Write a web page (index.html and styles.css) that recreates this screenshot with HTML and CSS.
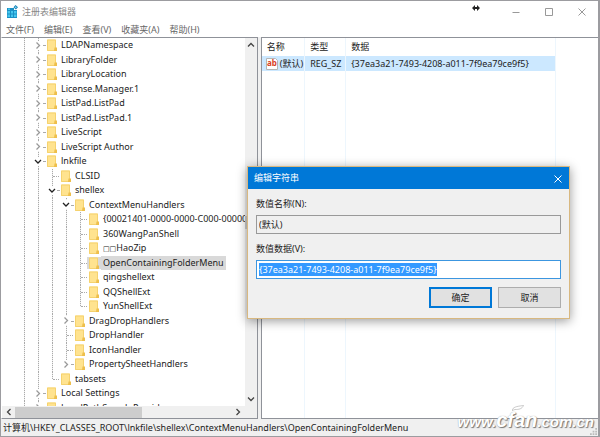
FILE: index.html
```
<!DOCTYPE html>
<html lang="zh-CN">
<head>
  <meta charset="UTF-8">
  <meta name="viewport" content="width=device-width, initial-scale=1.0">
  <title>注册表编辑器</title>
  <link rel="stylesheet" href="styles.css">
</head>
<body>
<svg class="defs" aria-hidden="true">
  <symbol id="right" viewBox="0 0 8 8"><path d="M2.5 1l3 3-3 3" fill="none" stroke="currentColor" stroke-width="1.3"/></symbol>
  <symbol id="down" viewBox="0 0 8 8"><path d="M1 2.500l3 3 3-3" fill="none" stroke="currentColor" stroke-width="1.3"/></symbol>
  <symbol id="up" viewBox="0 0 8 8"><path d="M1 5.500l3-3 3 3" fill="none" stroke="currentColor" stroke-width="1.3"/></symbol>
  <symbol id="left" viewBox="0 0 8 8"><path d="M5.5 1l-3 3 3 3" fill="none" stroke="currentColor" stroke-width="1.3"/></symbol>
  <symbol id="close" viewBox="0 0 10 10"><path d="M1.5 1.5l7 7M8.5 1.5l-7 7" fill="none" stroke="currentColor"/></symbol>
  <symbol id="folder" viewBox="0 0 10 12">
    <path d="M0 .5h9V9l1 .5V12H0z" fill="#ffe38f"/>
    <path d="M.5 1v10.500h8V1z" fill="none" stroke="#f5d26f"/>
    <path d="M7.500 8.500H10V12H7z" fill="#eebf4c"/>
  </symbol>
</svg>

<div class="window">
  <header class="titlebar">
    <svg class="app-icon" viewBox="0 0 12 13">
      <path d="M1 3h7v2h3v8H1z" fill="#1b8fc4"/>
      <path d="M1.500 6h2.500v2.500H1.500zM5 6h2v2.500H5zM8 6h2.500v2.500H8zM1.500 9.500h2.500V12H1.500zM5 9.500h2V12H5zM8 9.500h2.500V12H8zM2 3.500h2V5H2z" fill="#45c6ee"/>
      <path d="M9.500 0L12 2.200 9.800 4.500 7.500 2.300z" fill="#1780b5"/>
      <path d="M9.600 1.200l1.200 1-1 1.100-1.200-1z" fill="#7fd9f5"/>
    </svg>
    <h1>注册表编辑器</h1>
    <button class="win-btn" aria-label="最小化"><svg viewBox="0 0 10 10"><path d="M1.500 5.500h7" stroke="currentColor"/></svg></button>
    <button class="win-btn" aria-label="最大化"><svg viewBox="0 0 10 10"><path d="M1.500 1.500h7v7h-7z" fill="none" stroke="currentColor"/></svg></button>
    <button class="win-btn" aria-label="关闭"><svg><use href="#close"/></svg></button>
  </header>
  <nav class="menubar">
    <button>文件(F)</button>
    <button>编辑(E)</button>
    <button>查看(V)</button>
    <button>收藏夹(A)</button>
    <button>帮助(H)</button>
  </nav>

  <main class="panes">
    <section class="tree-pane">
      <div class="tree-view">
        <ul class="tree">
          <li><i class="line"></i><i class="line fold"><svg><use href="#right"/></svg></i><svg class="folder"><use href="#folder"/></svg><span>LDAPNamespace</span></li>
          <li><i class="line"></i><i class="line fold"><svg><use href="#right"/></svg></i><svg class="folder"><use href="#folder"/></svg><span>LibraryFolder</span></li>
          <li><i class="line"></i><i class="line fold"><svg><use href="#right"/></svg></i><svg class="folder"><use href="#folder"/></svg><span>LibraryLocation</span></li>
          <li><i class="line"></i><i class="line fold"><svg><use href="#right"/></svg></i><svg class="folder"><use href="#folder"/></svg><span>License.Manager.1</span></li>
          <li><i class="line"></i><i class="line fold"><svg><use href="#right"/></svg></i><svg class="folder"><use href="#folder"/></svg><span>ListPad.ListPad</span></li>
          <li><i class="line"></i><i class="line fold"><svg><use href="#right"/></svg></i><svg class="folder"><use href="#folder"/></svg><span>ListPad.ListPad.1</span></li>
          <li><i class="line"></i><i class="line fold"><svg><use href="#right"/></svg></i><svg class="folder"><use href="#folder"/></svg><span>LiveScript</span></li>
          <li><i class="line"></i><i class="line fold"><svg><use href="#right"/></svg></i><svg class="folder"><use href="#folder"/></svg><span>LiveScript Author</span></li>
          <li><i class="line"></i><i class="line fold open"><svg><use href="#down"/></svg></i><svg class="folder"><use href="#folder"/></svg><span>lnkfile</span></li>
          <li><i class="line"></i><i class="line"></i><i class="line tee"></i><svg class="folder"><use href="#folder"/></svg><span>CLSID</span></li>
          <li><i class="line"></i><i class="line"></i><i class="line fold open"><svg><use href="#down"/></svg></i><svg class="folder"><use href="#folder"/></svg><span>shellex</span></li>
          <li><i class="line"></i><i class="line"></i><i class="line"></i><i class="line fold open"><svg><use href="#down"/></svg></i><svg class="folder"><use href="#folder"/></svg><span>ContextMenuHandlers</span></li>
          <li><i class="line"></i><i class="line"></i><i class="line"></i><i class="line"></i><i class="line tee"></i><svg class="folder"><use href="#folder"/></svg><span>{00021401-0000-0000-C000-000000000046}</span></li>
          <li><i class="line"></i><i class="line"></i><i class="line"></i><i class="line"></i><i class="line tee"></i><svg class="folder"><use href="#folder"/></svg><span>360WangPanShell</span></li>
          <li><i class="line"></i><i class="line"></i><i class="line"></i><i class="line"></i><i class="line tee"></i><svg class="folder"><use href="#folder"/></svg><span><b>□□</b>HaoZip</span></li>
          <li class="selected"><i class="line"></i><i class="line"></i><i class="line"></i><i class="line"></i><i class="line tee"></i><svg class="folder"><use href="#folder"/></svg><span>OpenContainingFolderMenu</span></li>
          <li><i class="line"></i><i class="line"></i><i class="line"></i><i class="line"></i><i class="line tee"></i><svg class="folder"><use href="#folder"/></svg><span>qingshellext</span></li>
          <li><i class="line"></i><i class="line"></i><i class="line"></i><i class="line"></i><i class="line tee"></i><svg class="folder"><use href="#folder"/></svg><span>QQShellExt</span></li>
          <li><i class="line"></i><i class="line"></i><i class="line"></i><i class="line"></i><i class="line tee end"></i><svg class="folder"><use href="#folder"/></svg><span>YunShellExt</span></li>
          <li><i class="line"></i><i class="line"></i><i class="line"></i><i class="line fold"><svg><use href="#right"/></svg></i><svg class="folder"><use href="#folder"/></svg><span>DragDropHandlers</span></li>
          <li><i class="line"></i><i class="line"></i><i class="line"></i><i class="line tee"></i><svg class="folder"><use href="#folder"/></svg><span>DropHandler</span></li>
          <li><i class="line"></i><i class="line"></i><i class="line"></i><i class="line tee"></i><svg class="folder"><use href="#folder"/></svg><span>IconHandler</span></li>
          <li><i class="line"></i><i class="line"></i><i class="line"></i><i class="line fold end"><svg><use href="#right"/></svg></i><svg class="folder"><use href="#folder"/></svg><span>PropertySheetHandlers</span></li>
          <li><i class="line"></i><i class="line"></i><i class="line tee end"></i><svg class="folder"><use href="#folder"/></svg><span>tabsets</span></li>
          <li><i class="line"></i><i class="line fold"><svg><use href="#right"/></svg></i><svg class="folder"><use href="#folder"/></svg><span>Local Settings</span></li>
          <li><i class="line"></i><i class="line fold"><svg><use href="#right"/></svg></i><svg class="folder"><use href="#folder"/></svg><span>LocalPathSearch.Provider</span></li>
        </ul>
      </div>
      <div class="scroll-v">
        <svg><use href="#up"/></svg>
        <div class="thumb"></div>
        <svg><use href="#down"/></svg>
      </div>
      <div class="scroll-h">
        <svg><use href="#left"/></svg>
        <div class="thumb"></div>
        <svg><use href="#right"/></svg>
      </div>
    </section>

    <section class="list-pane">
      <table>
        <colgroup><col class="col-name"><col class="col-type"><col class="col-data"><col></colgroup>
        <thead>
          <tr><th>名称</th><th>类型</th><th>数据</th><td></td></tr>
        </thead>
        <tbody>
          <tr class="active">
            <td class="name">
              <svg class="ab" viewBox="0 0 12 12">
                <path d="M.5.500h9l2 2v9H.5z" fill="#fff" stroke="#b5b5b5"/>
                <text x="1" y="8">ab</text>
              </svg>(默认)</td>
            <td>REG_SZ</td>
            <td>{37ea3a21-7493-4208-a011-7f9ea79ce9f5}</td>
            <td></td>
          </tr>
          <tr class="rest"><td></td><td></td><td></td><td></td></tr>
        </tbody>
      </table>
    </section>
  </main>

  <footer class="statusbar">计算机\HKEY_CLASSES_ROOT\lnkfile\shellex\ContextMenuHandlers\OpenContainingFolderMenu
    <svg class="grip" viewBox="0 0 8 8"><path d="M6 0h2v2H6zM3 3h2v2H3zM6 3h2v2H6zM0 6h2v2H0zM3 6h2v2H3zM6 6h2v2H6z" fill="#bbb"/></svg>
  </footer>
</div>

<form class="dialog" role="dialog" aria-labelledby="dialogTitle">
  <div class="dialog-title">
    <h2 id="dialogTitle">编辑字符串</h2>
    <button type="button" aria-label="关闭"><svg><use href="#close"/></svg></button>
  </div>
  <div class="dialog-body">
    <label for="valueName">数值名称(N):</label>
    <input id="valueName" type="text" value="(默认)" readonly>
    <label for="valueData">数值数据(V):</label>
    <input id="valueData" type="text" value="{37ea3a21-7493-4208-a011-7f9ea79ce9f5}" spellcheck="false">
    <div class="actions">
      <button type="submit" class="default">确定</button>
      <button type="button">取消</button>
    </div>
  </div>
</form>

<svg class="cursor" viewBox="0 0 8 6"><path d="M0 3l3-3v2h2V0l3 3-3 3V4H3v2z" fill="#222"/></svg>
<div class="watermark">www.<span>cfan</span>.com.cn
  <svg viewBox="0 0 12 6"><path d="M0 5.500C1 2 4 1.500 11.500.500 10 4 7 4.500 3 4.500z" fill="#fff" stroke="#999" stroke-width=".5"/></svg>
</div>
<script src="script.js"></script>
</body>
</html>
```
FILE: styles.css
```
* {
  margin: 0;
  padding: 0;
  box-sizing: border-box;
}
body {
  height: 100vh;
  overflow: hidden;
  position: relative;
  padding: 1px 2px 1px 1px;
  background: #9c9ca0;
  color: #222;
  font: 9px/14px "Noto Sans", "Noto Sans CJK SC", sans-serif;
}
button, input {
  font: inherit;
  color: inherit;
}
.defs {
  display: none;
}
.window {
  display: flex;
  flex-direction: column;
  height: 100%;
  background: #fff;
}

/* Title and menu */
.titlebar {
  display: flex;
  align-items: center;
  height: 21px;
  padding-left: 5px;
}
.app-icon {
  width: 12px;
  height: 13px;
  margin-right: 4px;
}
h1 {
  flex: 1;
  font-size: 9px;
  font-weight: normal;
  color: #888;
}
.win-btn {
  width: 33px;
  height: 21px;
  border: 0;
  background: none;
  color: #999;
}
.win-btn svg, .dialog-title svg {
  width: 10px;
  height: 10px;
  vertical-align: middle;
}
.menubar {
  display: flex;
  gap: 10px;
  height: 15px;
  padding-left: 5px;
}
.menubar button {
  border: 0;
  background: none;
  color: #666;
}

/* Panes */
.panes {
  flex: 1;
  min-height: 0;
  display: flex;
  gap: 3px;
  background: #f0f0f0;
}
.tree-pane {
  flex: 0 0 43%;
  min-width: 0;
  display: grid;
  grid-template: minmax(0, 1fr) 12px / minmax(0, 1fr) 12px;
  border: 1px solid #8f9299;
  border-left-color: #fff;
  background: #f0f0f0;
}
.tree-view {
  display: flex;
  flex-direction: column;
  overflow: hidden;
  background: #fff;
}
.tree {
  flex: 1;
  display: grid;
  grid-auto-rows: 1fr;
  margin-bottom: -9px;
  padding-left: 15px;
  list-style: none;
}
.tree li {
  display: flex;
  min-height: 0;
  align-items: center;
  white-space: nowrap;
}
.tree i {
  flex: 0 0 14px;
  align-self: stretch;
  position: relative;
}
.line {
  background: repeating-linear-gradient(#aaa 0 1px, #eee 1px 2px) 7px 0 / 1px 100% no-repeat;
}
.line.end {
  background-size: 1px 50%;
}
.tee::after, .fold::after {
  content: "";
  position: absolute;
  left: 8px;
  right: 0;
  top: 50%;
  border-top: 1px dotted #aaa;
}
.fold::after {
  left: 12px;
}
.fold {
  display: flex;
  align-items: center;
  justify-content: center;
  color: #999;
}
.fold svg {
  width: 8px;
  height: 9px;
  background: #fff;
}
.fold.open {
  color: #222;
}
.folder {
  flex: none;
  width: 10px;
  height: 12px;
  margin: 0 2px;
}
.tree span {
  padding: 0 2px;
}
.tree b {
  font: 7px "DejaVu Sans", sans-serif;
}
.selected span, .selected .folder {
  background: #d9d9d9;
}
.selected .folder {
  margin-right: 0;
  box-shadow: 2px 0 #d9d9d9, -2px 0 #d9d9d9;
}
.selected span {
  margin-left: 2px;
}

/* Scrollbars */
.scroll-v, .scroll-h {
  display: flex;
  align-items: center;
  color: #444;
}
.scroll-v {
  flex-direction: column;
  padding: 3px 0;
}
.scroll-v .thumb {
  width: 12px;
  height: 13px;
  margin: auto 0;
  background: #cdcdcd;
}
.scroll-h {
  padding: 0 3px;
}
.scroll-h .thumb {
  width: 127px;
  height: 11px;
  margin: 0 auto 0 2px;
  background: #cdcdcd;
}
.scroll-v svg, .scroll-h svg {
  width: 8px;
  height: 8px;
}

/* Value list */
.list-pane {
  flex: 1;
  min-width: 0;
  border: 1px solid #8f9299;
  border-right: 0;
  background: #fff;
}
table {
  width: 100%;
  height: 100%;
  table-layout: fixed;
  border-collapse: collapse;
}
.col-name {
  width: 43px;
}
.col-type {
  width: 41px;
}
.col-data {
  width: 210px;
}
th, td {
  padding-left: 5px;
  border-right: 1px solid #edf6fd;
  font-weight: normal;
  text-align: left;
  white-space: nowrap;
}
th:last-child, td:last-child {
  border-right: 0;
}
thead tr {
  height: 18px;
}
.active {
  height: 15px;
}
.active td:not(:last-child) {
  background: #cce8ff;
}
td.name {
  padding-left: 4px;
}
.ab {
  width: 12px;
  height: 12px;
  margin-right: 2px;
  vertical-align: middle;
}
.ab text {
  font: bold 8px "Noto Sans", sans-serif;
  fill: #d8401f;
}

.statusbar {
  display: flex;
  justify-content: space-between;
  align-items: center;
  height: 17px;
  padding-left: 2px;
  background: #f0f0f0;
  white-space: nowrap;
}
.grip {
  width: 7px;
  height: 7px;
  align-self: flex-end;
  margin: 1px;
}

/* Edit dialog floating over the window */
.dialog {
  position: absolute;
  left: 247px;
  top: 166px;
  width: 323px;
  border: 1px solid #d8b880;
  background: #f0f0f0;
  box-shadow: 0 2px 10px rgba(0, 0, 0, 0.4);
}
.dialog-title {
  display: flex;
  align-items: center;
  justify-content: space-between;
  height: 22px;
  padding: 0 6px;
  background: #0078d7;
  color: #fff;
}
h2 {
  font-size: 9px;
  font-weight: normal;
}
.dialog-title button {
  border: 0;
  background: none;
}
.dialog-body {
  display: flex;
  flex-direction: column;
  padding: 8px 8px 10px;
}
.dialog label {
  height: 14px;
  margin-bottom: 4px;
}
.dialog input {
  height: 19px;
  margin-bottom: 8px;
  padding: 0 2px;
  border: 1px solid #999;
  background: #f0f0f0;
  outline: 0;
}
.dialog #valueData {
  border-color: #3c96e0;
  background: #fff;
}
.dialog input::selection {
  background: #3399ff;
  color: #fff;
}
.actions {
  display: flex;
  justify-content: flex-end;
  gap: 6px;
}
.actions button {
  width: 63px;
  height: 21px;
  border: 1px solid #adadad;
  background: #e1e1e1;
}
.actions .default {
  border: 2px solid #0078d7;
}

.cursor {
  position: absolute;
  left: 472px;
  top: 5px;
  width: 8px;
  height: 6px;
}
.watermark {
  position: absolute;
  right: 6px;
  bottom: 5px;
  color: #fff;
  font: italic bold 15px/20px "Liberation Sans", sans-serif;
  text-shadow: 1px 1px 1px #777, 0 0 1px #999;
}
.watermark span {
  font-size: 20px;
}
.watermark svg {
  position: absolute;
  left: 54px;
  top: -5px;
  width: 12px;
  height: 6px;
}
```
FILE: script.js
```
const valueData = document.getElementById('valueData');
valueData.focus();
valueData.select();
```
